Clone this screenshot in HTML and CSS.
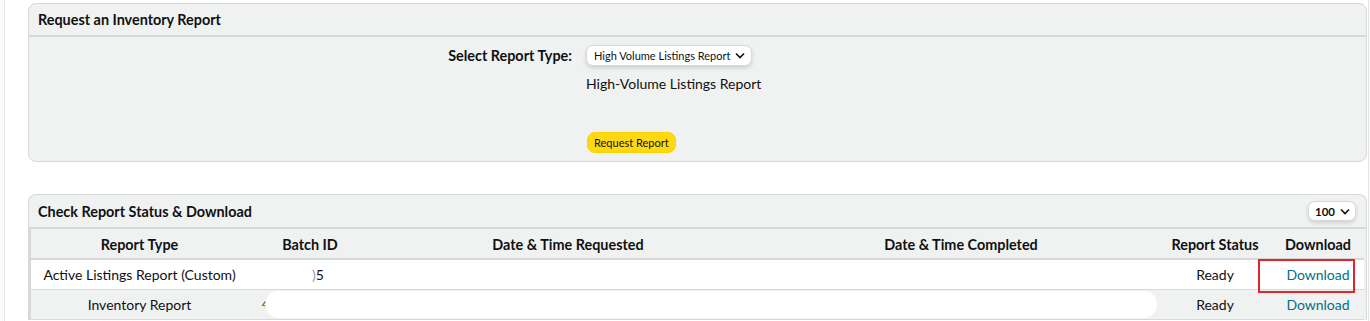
FILE: index.html
```html
<!DOCTYPE html>
<html lang="en">
<head>
    <meta charset="UTF-8">
    <title>Inventory Reports</title>
    <link rel="stylesheet" href="styles.css">
</head>
<body>
    <div class="page">
        <div class="panel request-panel">
            <div class="panel-header">Request an Inventory Report</div>
            <div class="panel-body">
                <div class="form-grid">
                    <div class="form-label">Select Report Type:</div>
                    <div class="form-control">
                        <div class="dropdown">
                            <span>High Volume Listings Report</span>
                            <svg class="chevron" width="10" height="7" viewBox="0 0 10 7"><polyline points="1,1.5 5,5.5 9,1.5" fill="none" stroke="#0f1111" stroke-width="1.6"/></svg>
                        </div>
                        <div class="report-desc">High-Volume Listings Report</div>
                        <button class="btn-request">Request Report</button>
                    </div>
                </div>
            </div>
        </div>

        <div class="panel status-panel">
            <div class="panel-header">
                <span>Check Report Status &amp; Download</span>
                <div class="dropdown dropdown-small">
                    <span>100</span>
                    <svg class="chevron" width="10" height="7" viewBox="0 0 10 7"><polyline points="1,1.5 5,5.5 9,1.5" fill="none" stroke="#0f1111" stroke-width="1.6"/></svg>
                </div>
            </div>
            <div class="table-wrap">
                <table class="report-table">
                    <colgroup>
                        <col style="width:218px">
                        <col style="width:124px">
                        <col style="width:392px">
                        <col style="width:394px">
                        <col style="width:114px">
                        <col style="width:92px">
                    </colgroup>
                    <thead>
                        <tr>
                            <th>Report Type</th>
                            <th>Batch ID</th>
                            <th>Date &amp; Time Requested</th>
                            <th>Date &amp; Time Completed</th>
                            <th>Report Status</th>
                            <th>Download</th>
                        </tr>
                    </thead>
                    <tbody>
                        <tr>
                            <td>Active Listings Report (Custom)</td>
                            <td class="batch"><span class="faint">)</span>5</td>
                            <td></td>
                            <td></td>
                            <td>Ready</td>
                            <td><a href="#" class="link">Download</a></td>
                        </tr>
                        <tr class="alt">
                            <td>Inventory Report</td>
                            <td class="batch-left">4</td>
                            <td></td>
                            <td></td>
                            <td>Ready</td>
                            <td><a href="#" class="link">Download</a></td>
                        </tr>
                    </tbody>
                </table>
                <div class="redact"></div>
                <div class="highlight"></div>
            </div>
        </div>
    </div>
</body>
</html>
```

FILE: styles.css
```css
body {
    margin: 0;
    background-color: #fafafa;
    font-family: Lato, "Noto Sans", sans-serif;
    color: #0f1111;
    height: 321px;
    overflow: hidden;
}

.page {
    margin-left: 4px;
    width: 1365px;
    min-height: 321px;
    background-color: #fff;
    border-left: 1px solid #e3e6e6;
    border-right: 1px solid #e3e6e6;
    padding: 3px 1px 0 23px;
    box-sizing: border-box;
}

.panel {
    border: 1px solid #d5d9d9;
    border-radius: 8px;
    background-color: #f0f2f2;
}

.panel-header {
    height: 31px;
    padding: 0 10px 0 9px;
    display: flex;
    align-items: center;
    justify-content: space-between;
    font-weight: bold;
    font-size: 14.4px;
    border-bottom: 2px solid #d5d9d9;
}

.panel-body {
    height: 124px;
    padding-top: 8px;
    box-sizing: border-box;
}

.form-grid {
    display: grid;
    grid-template-columns: 543px 1fr;
    column-gap: 14px;
}

.form-label {
    text-align: right;
    font-weight: bold;
    font-size: 14.4px;
    line-height: 21px;
}

.form-control {
    display: flex;
    flex-direction: column;
    align-items: flex-start;
}

.dropdown {
    display: inline-flex;
    align-items: center;
    gap: 5px;
    height: 21px;
    padding: 0 6px 0 7px;
    background-color: #fff;
    border: 1px solid #d5d9d9;
    border-radius: 7px;
    box-shadow: 0 2px 4px rgba(15, 17, 17, 0.15);
    font-size: 11px;
    font-weight: normal;
    box-sizing: border-box;
}

.dropdown-small {
    height: 20px;
    font-weight: bold;
    font-size: 11.5px;
    gap: 5px;
    padding: 0 5px 0 6px;
}

.report-desc {
    font-size: 14px;
    margin-top: 9px;
    line-height: 18px;
}

.btn-request {
    margin-top: 39px;
    margin-left: 1px;
    height: 21px;
    padding: 0 6px;
    background-color: #ffd814;
    border: 1px solid #fcd200;
    border-radius: 8px;
    font-family: inherit;
    font-size: 11px;
    color: #0f1111;
}

.status-panel {
    margin-top: 32px;
    border-bottom: none;
    border-radius: 8px 8px 0 0;
}

.status-panel .panel-header {
    height: 32px;
}

.table-wrap {
    position: relative;
}

.report-table {
    table-layout: fixed;
    width: 1335px;
    border-collapse: collapse;
    border-left: 2px solid #d5d9d9;
    font-size: 14px;
}

.report-table th {
    height: 27px;
    padding: 2px 0 0;
    font-weight: bold;
    font-size: 14.4px;
    text-align: center;
    border-bottom: 2px solid #d5d9d9;
}

.report-table td {
    height: 29px;
    padding: 0;
    text-align: center;
    background-color: #fff;
    border-bottom: 1px solid #d5d9d9;
    white-space: nowrap;
}

.report-table tr.alt td {
    background-color: #f0f2f2;
}

.batch {
    padding-left: 16px !important;
}

.faint {
    color: #999;
}

.batch-left {
    text-align: left !important;
    padding-left: 14px !important;
    font-size: 9px;
}

.link {
    color: #007185;
    text-decoration: none;
}

.redact {
    position: absolute;
    left: 236px;
    top: 62px;
    width: 892px;
    height: 27px;
    background-color: #fff;
    border-radius: 14px;
}

.highlight {
    position: absolute;
    left: 1229px;
    top: 30px;
    width: 97px;
    height: 34px;
    border: 2px solid #e3242b;
    box-sizing: border-box;
}
```
